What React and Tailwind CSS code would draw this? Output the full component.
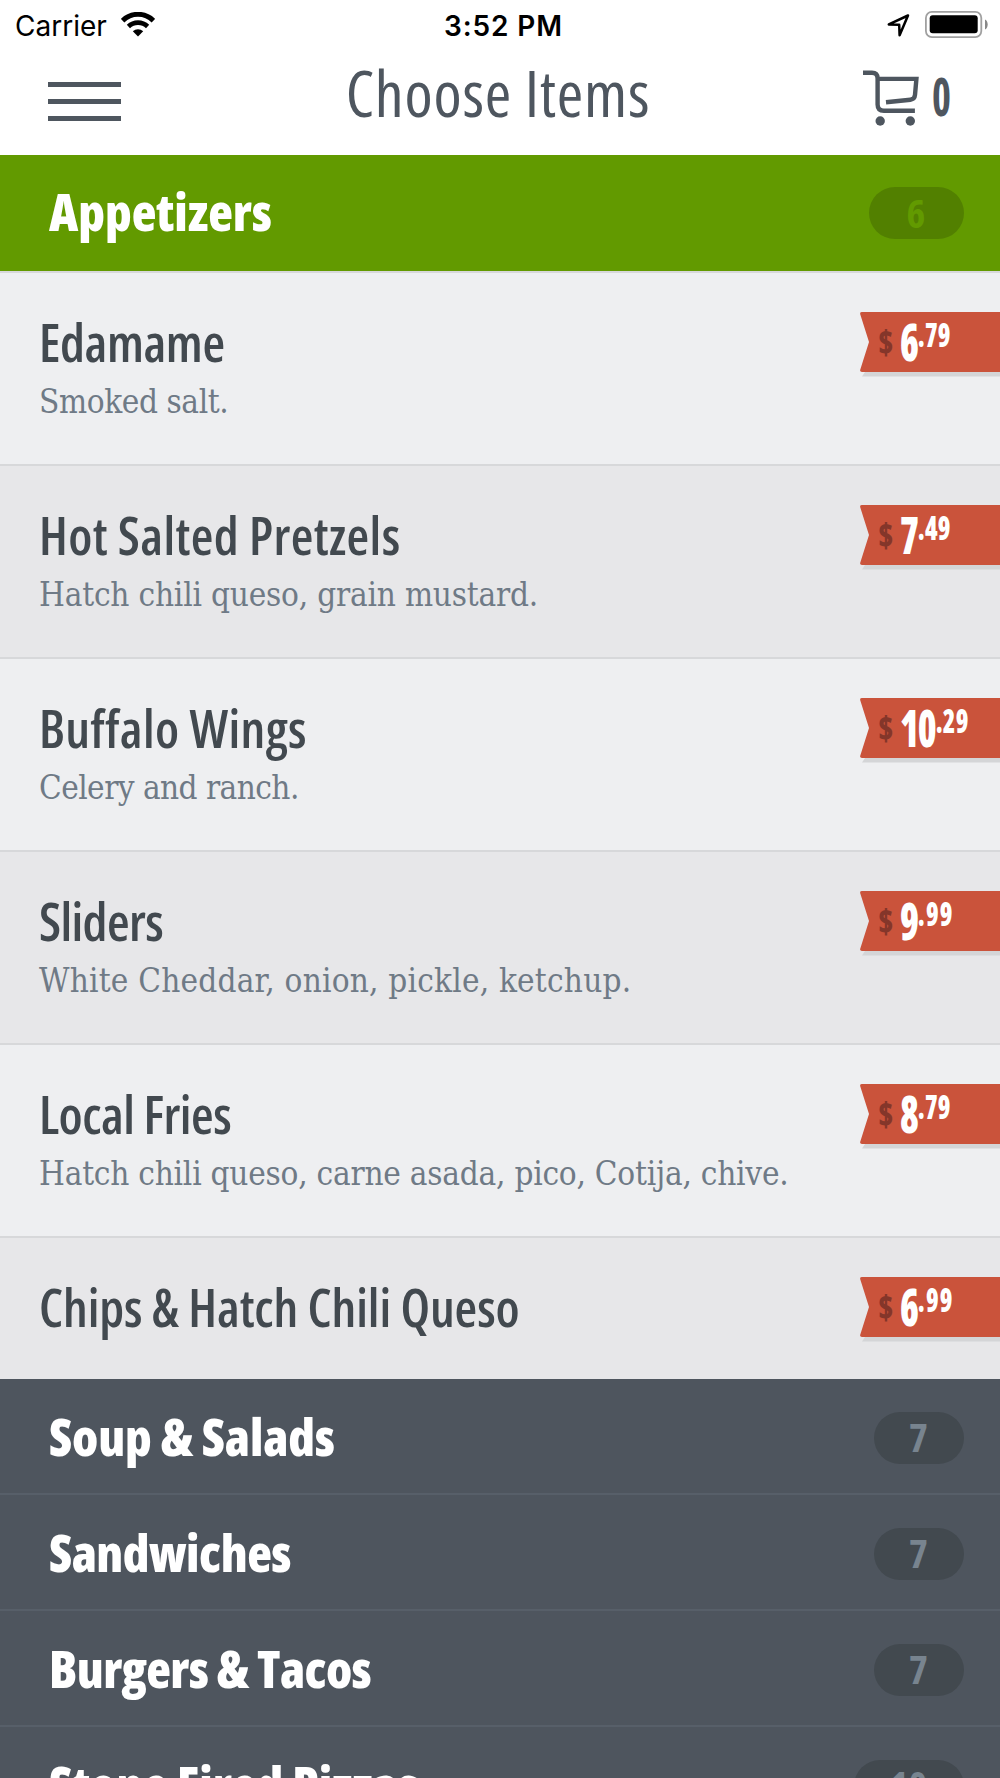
const items = [
  { name: 'Edamame', desc: 'Smoked salt.', dollars: '6', cents: '79', nameClass: 'tracking-[-0.4px]', descClass: 'tracking-[-0.4px]' },
  { name: 'Hot Salted Pretzels', desc: 'Hatch chili queso, grain mustard.', dollars: '7', cents: '49', nameClass: 'tracking-[0.4px]', descClass: 'tracking-[-0.2px]' },
  { name: 'Buffalo Wings', desc: 'Celery and ranch.', dollars: '10', cents: '29', nameClass: 'tracking-[0.4px]', descClass: 'tracking-[-0.55px]' },
  { name: 'Sliders', desc: 'White Cheddar, onion, pickle, ketchup.', dollars: '9', cents: '99', nameClass: 'tracking-[-0.6px]', descClass: 'tracking-[0.2px]' },
  { name: 'Local Fries', desc: 'Hatch chili queso, carne asada, pico, Cotija, chive.', dollars: '8', cents: '79', nameClass: 'tracking-[-0.5px]', descClass: 'tracking-[-0.23px]' },
  { name: 'Chips & Hatch Chili Queso', desc: null, dollars: '6', cents: '99', nameClass: 'tracking-[-0.1px]', descClass: '' },
]

const categories = [
  { name: 'Soup & Salads', count: 7, nameClass: 'tracking-[-0.15px]' },
  { name: 'Sandwiches', count: 7, nameClass: 'tracking-[-0.5px]' },
  { name: 'Burgers & Tacos', count: 7, nameClass: 'tracking-[-0.65px]' },
  { name: 'Stone Fired Pizzas', count: 10, nameClass: '' },
]

function StatusBar() {
  return (
    <div className="grid h-[52px] grid-cols-3 items-center pl-[15px] pr-3 font-['Inter',sans-serif] text-[28px] leading-none text-black">
      <div className="flex items-center gap-3.5">
        <span>Carrier</span>
        <svg width="34" height="25" viewBox="0 0 34 25" className="-mt-1" fill="none" stroke="#000">
          <path d="M1.6 8.6a22 22 0 0 1 30.8 0" strokeWidth="5" />
          <path d="M7.4 14.5a13.8 13.8 0 0 1 19.2 0" strokeWidth="4.6" />
          <path d="M17 24.5l-5.2-5.2a7.4 7.4 0 0 1 10.4 0z" fill="#000" stroke="none" />
        </svg>
      </div>
      <div className="pl-1 text-center font-semibold tracking-[0.9px]">3:52 PM</div>
      <div className="flex items-center justify-end gap-[15px]">
        <svg width="23" height="23" viewBox="0 0 23 23" fill="none" stroke="#000" strokeWidth="2.5" strokeLinejoin="round" className="-mt-0.5">
          <path d="M21 1.5L1.8 10.4l10.4.4.4 10.400z" />
        </svg>
        <svg width="63" height="27" viewBox="0 0 63 27" className="-mt-1">
          <rect x="0.9" y="0.9" width="55.4" height="25.2" rx="6" fill="none" stroke="#a0a0a0" strokeWidth="1.8" />
          <rect x="4.7" y="4.2" width="48" height="18" rx="3" fill="#000" />
          <path d="M60 8.5c3.6 1.8 3.6 8.2 0 10z" fill="#888" />
        </svg>
      </div>
    </div>
  )
}

function Header() {
  return (
    <div className="grid h-[103px] grid-cols-3 items-start px-12 text-[#4e565f]">
      <div className="mt-[30px] flex w-[73px] flex-col gap-3">
        <div className="h-[5px] bg-[#4e565f]"></div>
        <div className="h-[5px] bg-[#4e565f]"></div>
        <div className="h-[5px] bg-[#4e565f]"></div>
      </div>
      <h1 className="-ml-1 mt-[9px] text-center text-[64px] leading-none tracking-[0.8px] whitespace-nowrap">Choose Items</h1>
      <div className="mt-[18px] flex justify-end gap-3">
        <svg width="57" height="57" viewBox="0 0 57 57" fill="none" stroke="#4e565f" strokeWidth="4.4">
          <path d="M0 2.8h9q5.6 0 5.6 5.6v26q0 6.3 6.3 6.3h31" />
          <path d="M14.6 8.9h38.8l-1.4 16q-.3 4.3-4.6 4.8L23 32.3" />
          <circle cx="17.2" cy="51" r="4.7" fill="#4e565f" stroke="none" />
          <circle cx="47.3" cy="51" r="4.7" fill="#4e565f" stroke="none" />
        </svg>
        <span className="w-5 origin-left scale-x-[0.75] text-[54px] font-bold leading-[50px]">0</span>
      </div>
    </div>
  )
}

function CountPill({ count, active }) {
  return (
    <div className={`flex h-[52px] items-center justify-center rounded-full text-[40px] font-bold leading-none
      ${active ? 'w-[95px] bg-[#528000] text-[#629a00]' :
        count > 9 ? 'mt-[3px] w-[110px] bg-[#42494f] text-[#78848f]' :
        'mt-[3px] w-[90px] bg-[#42494f] text-[#78848f]'}`}
    >
      <span className="-mt-px pr-px">{count}</span>
    </div>
  )
}

function PriceTag({ dollars, cents }) {
  return (
    <div className="relative mt-[39px] h-[60px] w-[140px] shrink-0">
      <svg width="140" height="68" viewBox="0 0 140 68" className="absolute top-0 left-0">
        <path d="M5 60h135v4.5H2z" fill="#d4d5d7" />
        <path d="M2 0H140V60H2Q-.5 60 .3 57.5L9 30 .3 2.5Q-.5 0 2 0z" fill="#ca533b" />
      </svg>
      <div className="relative flex pl-[18px] leading-[60px]">
        <span className="w-[22px] origin-left scale-x-[0.92] text-[34px] font-extrabold text-[#84362a]">$</span>
        <div className="flex origin-left scale-x-[0.75] font-extrabold text-white">
          <span className="-mt-px text-[51px] tracking-[-1.5px]">{dollars}</span>
          <span className={`-mt-2 text-[34px] ${cents === '99' ? 'tracking-[1.5px]' : 'tracking-[0.3px]'}`}>.{cents}</span>
        </div>
      </div>
    </div>
  )
}

function MenuItem({ item, index }) {
  return (
    <div className={`flex justify-between border-t-2 border-[#d7d8da] pl-[39px]
      ${index % 2 === 0 ? 'bg-[#eeeff1]' : 'bg-[#e7e7e9]'}
      ${item.desc ? 'h-[193px]' : 'h-[143px]'}`}
    >
      <div className="pt-[39px] whitespace-nowrap">
        <h3 className={`text-[52px] font-semibold leading-[60px] text-[#42494f] ${item.nameClass}`}>{item.name}</h3>
        {item.desc && (
          <p className={`mt-2.5 font-['DejaVu_Serif',serif] text-[33px] font-stretch-condensed leading-10 text-[#6f7a86] ${item.descClass}`}>
            {item.desc}
          </p>
        )}
      </div>
      <PriceTag dollars={item.dollars} cents={item.cents} />
    </div>
  )
}

function App() {
  return (
    <div className="h-[1778px] w-[1000px] overflow-hidden bg-white font-['Open_Sans',sans-serif] font-stretch-condensed">
      <StatusBar />
      <Header />

      <div className="flex h-[116px] items-center justify-between bg-[#629a00] pl-[49px] pr-9">
        <h2 className="pb-[3px] text-[51px] font-extrabold leading-none text-white">Appetizers</h2>
        <CountPill count={6} active />
      </div>

      {items.map((item, index) => (
        <MenuItem key={item.name} item={item} index={index} />
      ))}

      {categories.map((cat) => (
        <div key={cat.name} className="flex h-[116px] items-center justify-between border-b-2 border-[#575f69] bg-[#4e555e] pl-[49px] pr-9">
          <h2 className={`text-[51px] font-extrabold leading-none text-white ${cat.nameClass}`}>{cat.name}</h2>
          <CountPill count={cat.count} />
        </div>
      ))}
    </div>
  )
}

export default App
